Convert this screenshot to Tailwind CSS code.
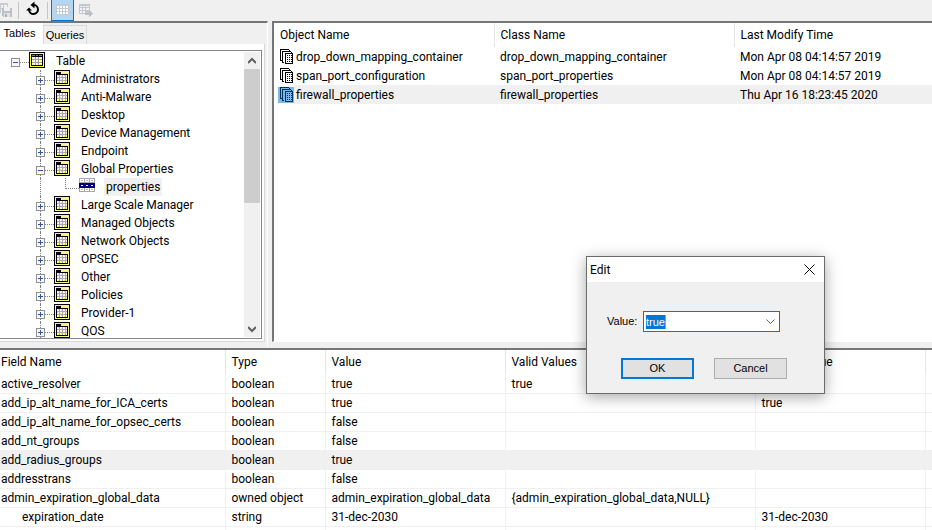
<!DOCTYPE html>
<html lang="en">
<head>
    <meta charset="UTF-8">
    <meta name="viewport" content="width=device-width, initial-scale=1.0">
    <title>Database Tool</title>
    <script src="https://cdn.jsdelivr.net/npm/@tailwindcss/browser@4"></script>
</head>
<body class="bg-[#f0f0f0] font-['Roboto',sans-serif] text-xs text-black">
    <!-- Shared icons -->
    <svg class="absolute h-0 w-0" aria-hidden="true">
        <defs>
            <pattern id="dither" width="2" height="2" patternUnits="userSpaceOnUse">
                <rect width="2" height="2" fill="#ffff10"/>
                <path d="M0 0h1v1H0zM1 1h1v1H1z" fill="#ffff9c"/>
            </pattern>
        </defs>
        <symbol id="icon-root" viewBox="0 0 16 16">
            <path d="M0 0h16v16H0z"/>
            <path d="M1 1h14v14H1z" fill="url(#dither)"/>
            <path d="M2 2h12v12H2z"/>
            <path d="M3 5h10v8H3z" fill="#fff"/>
            <path d="M3 7h10v1H3zM3 10h10v1H3zM6 5h1v8H6zM9 5h1v8H9z" fill="#a0a0a0"/>
            <path d="M3 3h3v1H3zM7 3h2v1H7zM10 3h3v1h-3z" fill="#808080"/>
            <path d="M4 5h1v1H4zM8 6h1v1H8zM11 5h1v1h-1zM4 8h1v1H4zM8 9h1v1H8zM11 8h1v1h-1zM4 12h1v1H4zM8 11h1v1H8zM11 12h1v1h-1z" fill="#ff0"/>
        </symbol>
        <symbol id="icon-table" viewBox="0 0 16 16">
            <path d="M0 0h16v16H0z"/>
            <path d="M1 1h14v14H1z" fill="url(#dither)"/>
            <path d="M2 2h5v2h7v10H2z"/>
            <path d="M3 5h10v8H3z" fill="#fff"/>
            <path d="M3 7h10v1H3zM3 10h10v1H3zM5 5h1v8H5zM8 5h1v8H8zM11 5h1v8h-1z" fill="#a8a8a8"/>
            <path d="M4 5h1v1H4zM7 6h1v1H7zM10 5h1v1h-1zM3 8h1v1H3zM6 9h1v1H6zM9 8h1v1H9zM12 9h1v1h-1zM4 12h1v1H4zM7 11h1v1H7zM10 12h1v1h-1z" fill="#ff0"/>
        </symbol>
        <symbol id="icon-props" viewBox="0 0 16 16">
            <path d="M0 0h16v14H0z" fill="#a8a8a8"/>
            <path d="M1 1h4v3H1zM6 1h4v3H6zM11 1h4v3h-4zM1 10h4v3H1zM6 10h4v3H6zM11 10h4v3h-4z" fill="#fff"/>
            <path d="M2 2h2v1H2zM7 2h2v1H7zM12 2h2v1h-2zM2 11h2v1H2zM7 11h2v1H7zM12 11h2v1h-2z" fill="#b8b8b8"/>
            <path d="M0 5h16v5H0z" fill="#000080"/>
            <path d="M2 7h2v1H2zM7 7h2v1H7zM12 7h2v1h-2z" fill="#fff"/>
        </symbol>
        <symbol id="icon-objects" viewBox="0 0 16 16">
            <path d="M2 0h9v1H3v10H2z" fill="currentColor"/>
            <path d="M11 1h1v1h-1zM2 11h2v1H2zM4 2h9v1H5v10H4zM4 13h2v1H4zM13 3h1v1h-1z" fill="currentColor"/>
            <path d="M7 4h7l1 1v10H7z" fill="currentColor"/>
            <path d="M8 5h6v9H8z" fill="var(--paper)"/>
            <path d="M9 6h1v1H9zM11 6h1v1h-1zM13 6h1v1h-1zM9 8h1v1H9zM11 8h1v1h-1zM13 8h1v1h-1zM9 10h1v1H9zM11 10h1v1h-1zM13 10h1v1h-1zM9 12h1v1H9zM11 12h1v1h-1zM13 12h1v1h-1z" fill="currentColor"/>
        </symbol>
    </svg>

    <div class="flex h-screen flex-col overflow-hidden">
        <!-- Toolbar -->
        <div class="flex h-[21px] shrink-0 items-stretch">
            <button class="w-[18px]" aria-label="Save" disabled>
                <svg class="h-[21px] w-[18px]" shape-rendering="crispEdges">
                    <path d="M0 3h8v2H0zM0 3h1v10H0zM0 8h4v1H0zM3 5h1v7H3zM7 3h1v4H7z" fill="#c9cdd2"/>
                    <path d="M2 8h10v9H3l-1-1z" fill="#bcc1c7"/>
                    <path d="M4 8h6v3H4z" fill="#f0f0f0"/>
                    <path d="M4 13h6v4H4z" fill="#e2e4e7"/>
                    <path d="M5 14h2v3H5z" fill="#adb3ba"/>
                </svg>
            </button>
            <span class="my-0.5 w-px bg-[#c4c4c4]"></span>
            <button class="w-7" aria-label="Refresh">
                <svg class="h-[21px] w-7" fill="none" stroke="#000" stroke-width="2">
                    <path d="M14 5h1a4.500 4.500 0 1 1-5 5"/>
                    <path d="M15.500 1.500v7l-4-3.500z" fill="#000" stroke="none"/>
                    <path d="M7 10.500h6l-3-3z" fill="#000" stroke="none"/>
                </svg>
            </button>
            <span class="my-0.5 w-px bg-[#c4c4c4]"></span>
            <button class="ml-[3px] w-[23px] border border-t-0 border-[#0078d7] bg-[#b3d7f3]" aria-label="Table view">
                <svg class="h-5 w-[21px]" shape-rendering="crispEdges">
                    <path d="M4 4h13v11H4z" fill="#c3cad1"/>
                    <path d="M5 6h2v2H5zM8 6h2v2H8zM11 6h2v2h-2zM14 6h2v2h-2zM5 9h2v2H5zM8 9h2v2H8zM11 9h2v2h-2zM14 9h2v2h-2zM5 12h2v2H5zM8 12h2v2H8zM11 12h2v2h-2zM14 12h2v2h-2z" fill="#fff"/>
                </svg>
            </button>
            <button class="w-6" aria-label="Export table" disabled>
                <svg class="h-[21px] w-6" shape-rendering="crispEdges">
                    <path d="M5 4h11v10H5z" fill="#c3c8ce"/>
                    <path d="M6 6h2v1H6zM9 6h2v1H9zM12 6h3v1h-3zM6 8h2v2H6zM9 8h2v2H9zM12 8h3v2h-3zM6 11h2v2H6zM9 11h2v2H9z" fill="#f4f4f4"/>
                    <path d="M11 12h4v-2l4 4-4 3v-2h-4z" fill="#bcc1c7"/>
                </svg>
            </button>
        </div>

        <!-- Upper panes -->
        <div class="flex h-[327px] shrink-0">
            <!-- Tables / Queries -->
            <section class="flex w-[268px] shrink-0 flex-col border-t-2 border-r border-t-[#767676] border-r-white pr-0.5">
                <div class="flex h-[21px] items-end font-['Liberation_Sans',sans-serif] text-[11px]" role="tablist">
                    <button role="tab" aria-selected="true" class="h-[21px] w-[43px] bg-white pr-1">Tables</button>
                    <button role="tab" aria-selected="false" class="h-[19px] w-11 border border-b-0 border-[#d9d9d9]">Queries</button>
                </div>
                <div class="flex h-[298px] flex-col border-r border-b border-[#d9d9d9] bg-white pt-[6px] pr-0.5 pb-0.5">
                    <div class="flex min-h-0 flex-1 border border-l-0 border-[#828790]">
                        <ul id="tree" class="flex-1 overflow-hidden pt-px"></ul>
                        <div class="my-px mr-px flex w-4 flex-col bg-[#f0f0f0]">
                            <button class="flex h-[17px] items-center justify-center" aria-label="Scroll up">
                                <svg class="h-2 w-2" fill="none" stroke="#606060" stroke-width="2"><path d="M0 6l4-4 4 4"/></svg>
                            </button>
                            <div class="h-[134px] bg-[#cdcdcd]"></div>
                            <button class="mt-auto flex h-[17px] items-center justify-center" aria-label="Scroll down">
                                <svg class="h-2 w-2" fill="none" stroke="#606060" stroke-width="2"><path d="M0 2l4 4 4-4"/></svg>
                            </button>
                        </div>
                    </div>
                </div>
            </section>

            <!-- Objects -->
            <section class="mb-[6px] ml-1 flex-1 border-t-2 border-b border-l-2 border-t-[#767676] border-b-white border-l-[#767676] bg-white">
                <table class="w-full table-fixed text-left whitespace-nowrap">
                    <colgroup>
                        <col class="w-5"><col class="w-[200px]"><col class="w-60"><col>
                    </colgroup>
                    <thead>
                        <tr class="h-6 leading-4">
                            <th colspan="2" class="border-r border-[#e5e5e5] pl-[6px] font-normal">Object Name</th>
                            <th class="border-r border-[#e5e5e5] pl-[6px] font-normal">Class Name</th>
                            <th class="pl-[6px] font-normal">Last Modify Time</th>
                        </tr>
                    </thead>
                    <tbody id="objects"></tbody>
                </table>
            </section>
        </div>

        <!-- Fields -->
        <section class="min-h-0 flex-1 overflow-hidden border-t-2 border-[#767676] bg-white">
            <table class="w-full table-fixed text-left whitespace-nowrap">
                <colgroup>
                    <col class="w-[225px]"><col class="w-[100px]"><col class="w-[180px]"><col class="w-[250px]"><col class="w-[170px]"><col>
                </colgroup>
                <thead>
                    <tr class="h-6 leading-4">
                        <th class="border-r border-[#e5e5e5] pl-px font-normal">Field Name</th>
                        <th class="border-r border-[#e5e5e5] pl-[6px] font-normal">Type</th>
                        <th class="border-r border-[#e5e5e5] pl-[6px] font-normal">Value</th>
                        <th class="border-r border-[#e5e5e5] pl-[6px] font-normal">Valid Values</th>
                        <th class="border-r border-[#e5e5e5] pl-[6px] font-normal">Default Value</th>
                        <th class="pl-[6px]"><span class="block h-2 w-1 bg-[#fff0a0]"></span></th>
                    </tr>
                </thead>
                <tbody id="fields"></tbody>
            </table>
        </section>
    </div>

    <!-- Edit dialog -->
    <form role="dialog" aria-labelledby="dialog-title" class="absolute top-[256px] left-[586px] w-[239px] border border-[#6b6b6b] bg-[#f0f0f0] shadow-[0_3px_14px_rgba(0,0,0,0.35)]">
        <div class="flex h-[25px] items-center justify-between bg-white pr-[9px] pl-[3px]">
            <h2 id="dialog-title">Edit</h2>
            <button type="button" aria-label="Close">
                <svg class="h-[11px] w-[11px]" fill="none" stroke="#000"><path d="M0.500 0.500l10 10M10.500 0.500l-10 10"/></svg>
            </button>
        </div>
        <div class="px-5 pt-[29px] pb-[14px] font-['Liberation_Sans',sans-serif] text-[11px]">
            <div class="flex items-center">
                <label for="value" class="w-9">Value:</label>
                <div class="flex h-[21px] w-[137px] items-center border border-[#0078d7] bg-white pl-0.5">
                    <input id="value" value="true" class="field-sizing-content h-[14px] border-r border-[#ff8728] bg-[#0078d7] p-0 leading-[14px] text-white outline-none selection:bg-[#0078d7] selection:text-white">
                    <button type="button" aria-label="Show values" class="mr-1 ml-auto">
                        <svg class="h-[6px] w-[9px]" fill="none" stroke="#606060"><path d="M0.500 0.500l4 4 4-4"/></svg>
                    </button>
                </div>
            </div>
            <div class="mt-[26px] flex gap-5 pl-[14px]">
                <button type="submit" class="h-[21px] w-[73px] border-2 border-[#0078d7] bg-[#e1e1e1]">OK</button>
                <button type="button" class="h-[21px] w-[73px] border border-[#adadad] bg-[#e1e1e1]">Cancel</button>
            </div>
        </div>
    </form>

    <script>
        const folders = [
            'Administrators', 'Anti-Malware', 'Desktop', 'Device Management', 'Endpoint', 'Global Properties',
            'Large Scale Manager', 'Managed Objects', 'Network Objects', 'OPSEC', 'Other', 'Policies', 'Provider-1', 'QOS'
        ];
        const objects = [
            ['drop_down_mapping_container', 'drop_down_mapping_container', 'Mon Apr 08 04:14:57 2019'],
            ['span_port_configuration', 'span_port_properties', 'Mon Apr 08 04:14:57 2019'],
            ['firewall_properties', 'firewall_properties', 'Thu Apr 16 18:23:45 2020']
        ];
        const fields = [
            ['active_resolver', 'boolean', 'true', 'true', ''],
            ['add_ip_alt_name_for_ICA_certs', 'boolean', 'true', '', 'true'],
            ['add_ip_alt_name_for_opsec_certs', 'boolean', 'false', '', ''],
            ['add_nt_groups', 'boolean', 'false', '', ''],
            ['add_radius_groups', 'boolean', 'true', '', ''],
            ['addresstrans', 'boolean', 'false', '', ''],
            ['admin_expiration_global_data', 'owned object', 'admin_expiration_global_data', '{admin_expiration_global_data,NULL}', ''],
            ['expiration_date', 'string', '31-dec-2030', '', '31-dec-2030'],
            ['', '', '', '', '']
        ];

        // +/- box of a tree node
        function expander(open) {
            return `<button class="block h-[9px] w-[9px]" aria-label="${open ? 'Collapse' : 'Expand'}">
                <svg class="block h-[9px] w-[9px]" shape-rendering="crispEdges">
                    <rect x="0.500" y="0.500" width="8" height="8" fill="#f8f8f8" stroke="#919191"/>
                    <path d="M2 4h5v1H2z${open ? '' : 'M4 2h1v5H4z'}" fill="#3355a5"/>
                </svg>
            </button>`;
        }

        function treeRow(name) {
            const open = name === 'Global Properties';
            return `<li class="flex h-[18px] items-start pl-9">
                <span class="flex h-full w-[9px] flex-col items-center">
                    <i class="h-[6px] border-l border-dotted border-[#808080]"></i>
                    ${expander(open)}
                    <i class="flex-1 border-l border-dotted border-[#808080]"></i>
                </span>
                <i class="mt-[10px] w-[9px] border-t border-dotted border-[#808080]"></i>
                <svg class="h-4 w-4" shape-rendering="crispEdges"><use href="#icon-table"/></svg>
                <span class="pl-[11px] leading-[18px]">${name}</span>
            </li>`;
        }

        const propertiesRow = `<li class="flex h-[18px] items-start pl-10">
            <i class="h-full border-l border-dotted border-[#808080]"></i>
            <i class="ml-6 h-[11px] w-[14px] border-b border-l border-dotted border-[#808080]"></i>
            <svg class="h-4 w-4" shape-rendering="crispEdges"><use href="#icon-props"/></svg>
            <span class="ml-[9px] bg-[#f0f0f0] px-0.5 leading-[18px]">properties</span>
        </li>`;

        document.getElementById('tree').innerHTML = `<li class="flex h-[18px] items-start pl-[11px]">
            <span class="pt-[6px]">${expander(true)}</span>
            <i class="mt-[10px] w-[9px] border-t border-dotted border-[#808080]"></i>
            <svg class="h-4 w-4" shape-rendering="crispEdges"><use href="#icon-root"/></svg>
            <span class="pl-[11px] leading-[18px]">Table</span>
        </li>` + folders.map(name => treeRow(name) + (name === 'Global Properties' ? propertiesRow : '')).join('');

        document.getElementById('objects').innerHTML = objects.map(([name, cls, time], i) => {
            const selected = i === 2;
            return `<tr class="h-[19px] leading-4">
                <td class="pl-1"><svg class="h-4 w-4 ${selected ? 'bg-[#78b8ea] text-[#00305a] [--paper:#78b8ea]' : '[--paper:#ffffff]'}" shape-rendering="crispEdges"><use href="#icon-objects"/></svg></td>
                <td class="pt-px pl-0.5 ${selected ? 'bg-[#f0f0f0]' : ''}">${name}</td>
                <td class="pt-px pl-[6px] ${selected ? 'bg-[#f0f0f0]' : ''}">${cls}</td>
                <td class="pt-px pl-[6px] ${selected ? 'bg-[#f0f0f0]' : ''}">${time}</td>
            </tr>`;
        }).join('');

        document.getElementById('fields').innerHTML = fields.map((row, i) => {
            const cells = row.map((text, c) => {
                const pad = c > 0 ? 'pl-[6px]' : text === 'expiration_date' ? 'pl-[22px]' : 'pl-px';
                return `<td class="border-r border-b border-[#f0f0f0] pt-px ${pad}">${text}</td>`;
            }).join('');
            return `<tr class="h-[19px] leading-4 ${i === 4 ? 'bg-[#f0f0f0]' : ''}">${cells}
                <td class="border-b border-[#f0f0f0] pl-[6px]"><span class="mt-1 block h-0.5 w-1 bg-[#f5c880]"></span></td>
            </tr>`;
        }).join('');
    </script>
</body>
</html>
